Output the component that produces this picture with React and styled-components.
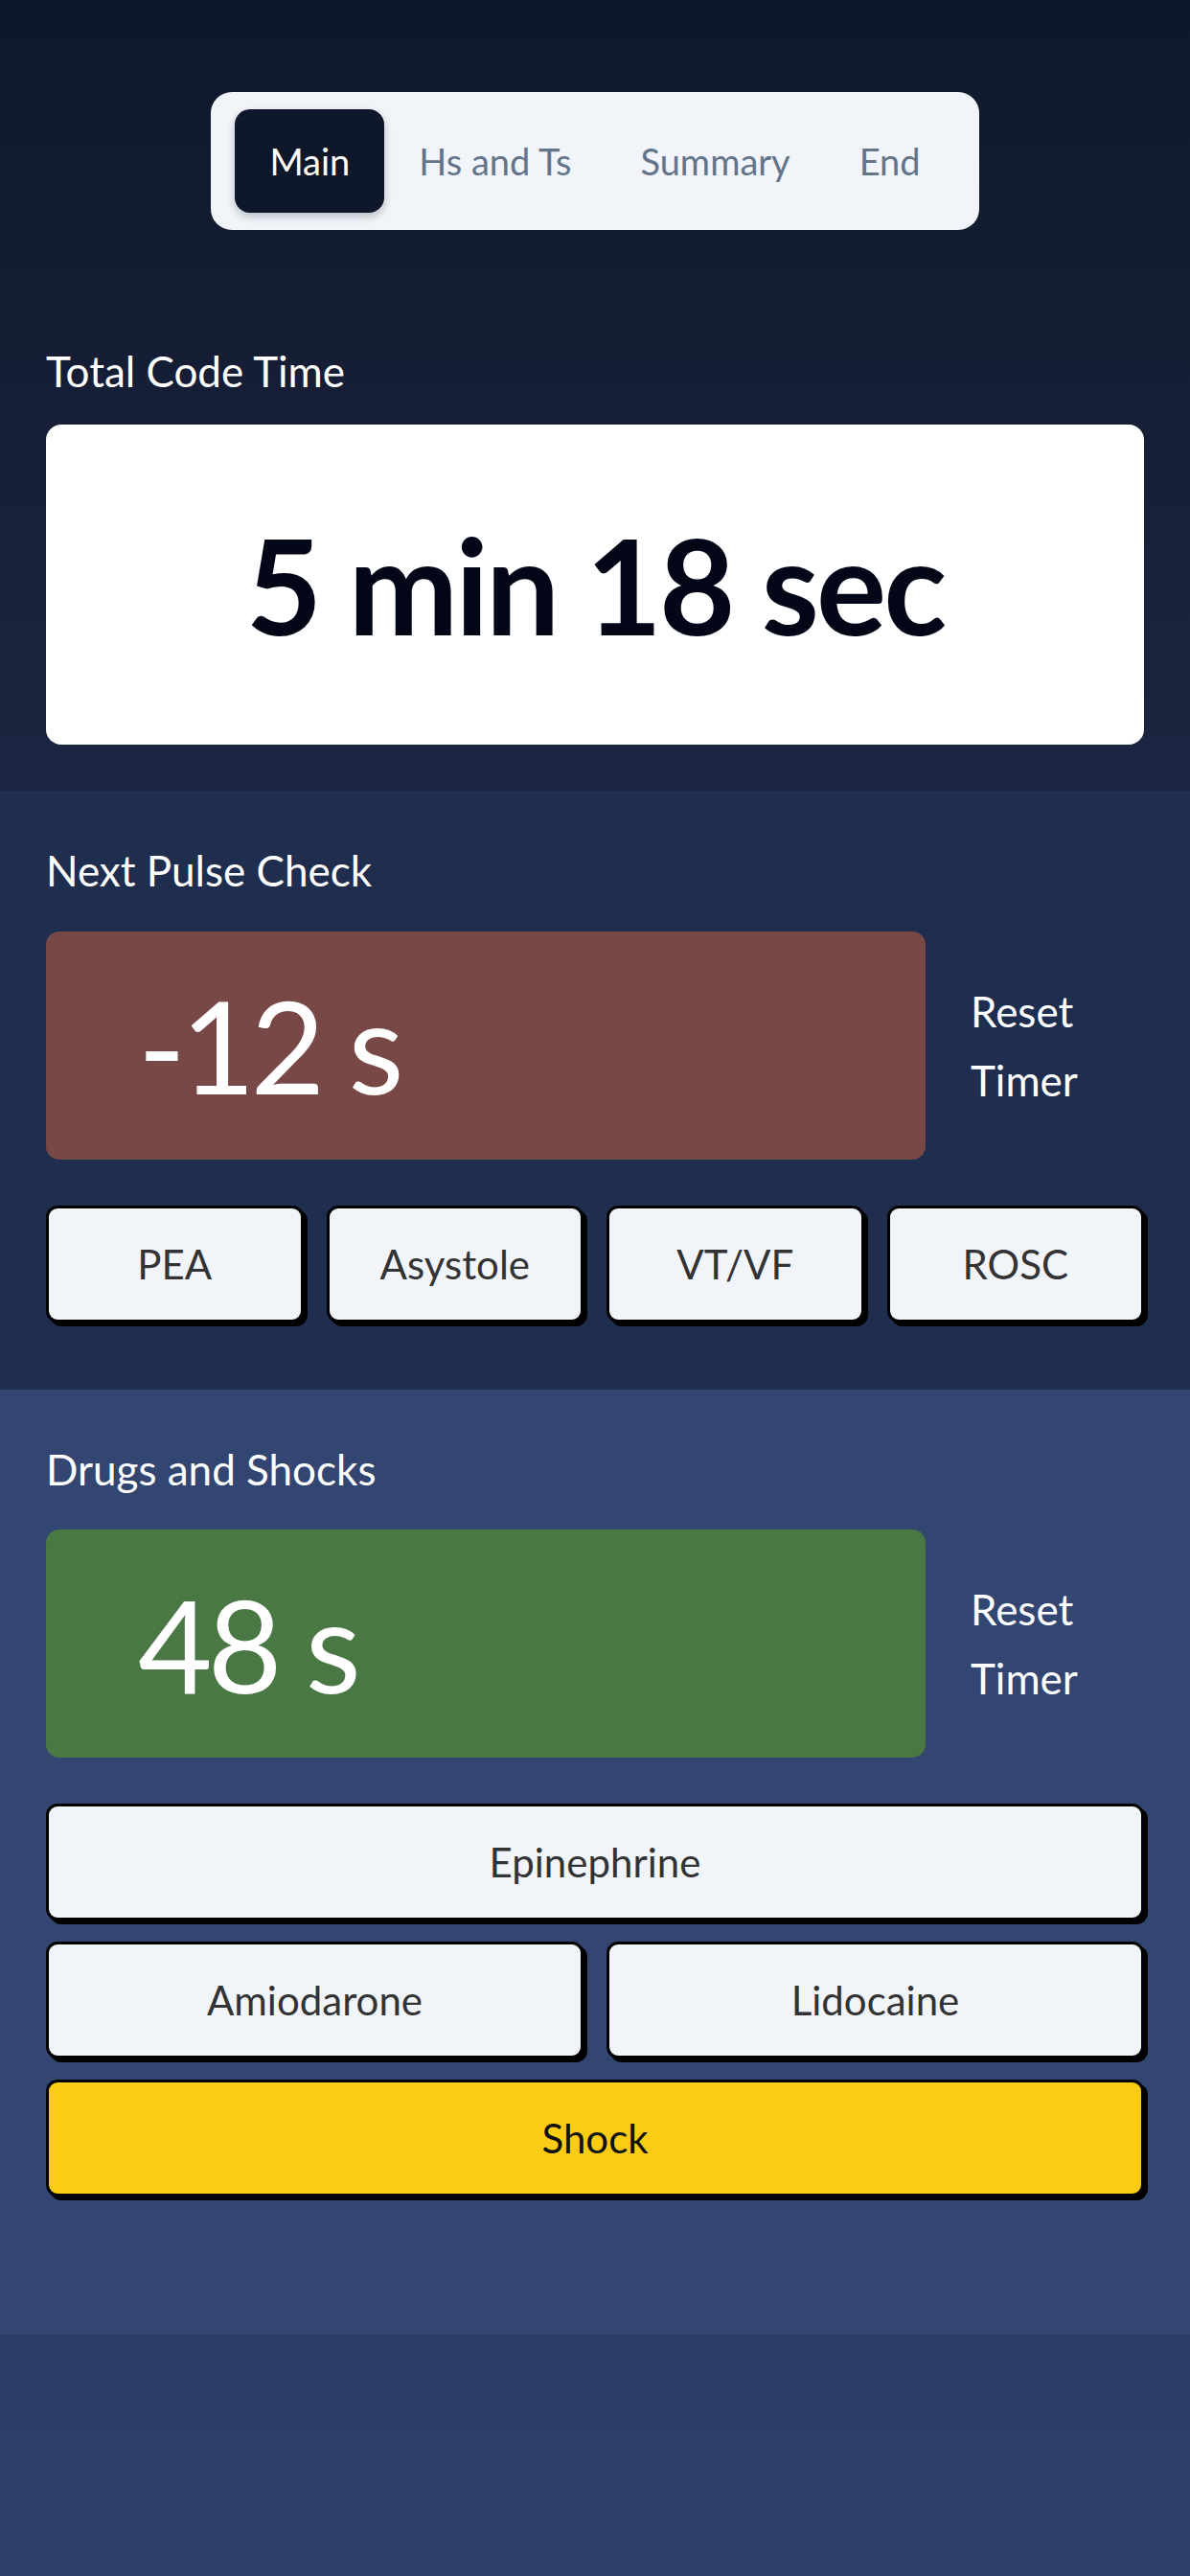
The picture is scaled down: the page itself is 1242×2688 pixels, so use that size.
import styled, { createGlobalStyle } from "styled-components";

const Global = createGlobalStyle`
    html, body {
        margin: 0;
        padding: 0;
    }
    body {
        font-family: Lato, "Noto Sans", sans-serif;
        background: #30416b;
    }
`

const Page = styled.div`
    min-height: 2688px;
    display: flex;
    flex-direction: column;
    background: linear-gradient(to bottom, #0f172a 0px, #1c2642 824px, #2f406a 2688px);
`

const Section = styled.section`
    padding: ${(props) => props.$pad};
    background: ${(props) => props.$bg || "transparent"};
    display: flex;
    flex-direction: column;
`

const TabBar = styled.nav`
    align-self: center;
    display: flex;
    padding: 18px 25px;
    border-radius: 22px;
    background: #f1f5f9;
`

const Tab = styled.button`
    border: none;
    height: 108px;
    padding: 0 36px;
    border-radius: 16px;
    font-family: inherit;
    font-size: 38px;
    background: ${(props) => (props.$active ? "#0f172a" : "transparent")};
    color: ${(props) => (props.$active ? "#ffffff" : "#64748b")};
    box-shadow: ${(props) => (props.$active ? "0 4px 8px rgba(15, 23, 42, 0.25)" : "none")};
`

const Label = styled.h2`
    margin: ${(props) => props.$mt || 0}px 0 ${(props) => props.$mb}px;
    font-size: 44px;
    font-weight: 400;
    line-height: 1.2;
    color: #ffffff;
`

const TimeCard = styled.div`
    height: 334px;
    border-radius: 16px;
    background: #ffffff;
    display: flex;
    align-items: center;
    justify-content: center;
    font-size: 137px;
    font-weight: 700;
    letter-spacing: -3px;
    color: #020617;
`

const TimerRow = styled.div`
    display: grid;
    grid-template-columns: 1fr 181px;
    column-gap: 47px;
    align-items: center;
`

const TimerBox = styled.div`
    height: 238px;
    border-radius: 14px;
    background: ${(props) => props.$bg};
    display: flex;
    align-items: center;
    padding-left: 96px;
    font-size: 134px;
    letter-spacing: -5px;
    color: #ffffff;
`

const ResetButton = styled.button`
    border: none;
    background: none;
    padding: 0;
    text-align: left;
    font-family: inherit;
    font-size: 44px;
    line-height: 72px;
    color: #ffffff;
`

const ButtonGrid = styled.div`
    margin-top: 48px;
    display: grid;
    grid-template-columns: repeat(${(props) => props.$cols}, 1fr);
    gap: 22px 24px;
`

const ActionButton = styled.button`
    grid-column: ${(props) => (props.$wide ? "1 / -1" : "auto")};
    height: 122px;
    border: 3px solid #000000;
    border-radius: 12px;
    box-shadow: 4px 4px 0 #000000;
    background: ${(props) => (props.$accent ? "#facc15" : "#f1f5f9")};
    color: ${(props) => (props.$accent ? "#111111" : "#333333")};
    font-family: inherit;
    font-size: 42px;
`

const tabs = ["Main", "Hs and Ts", "Summary", "End"]
const rhythms = ["PEA", "Asystole", "VT/VF", "ROSC"]

const Timer = ({ value, bg }) => (
    <TimerRow>
        <TimerBox $bg={bg}>{value}</TimerBox>
        <ResetButton>Reset<br />Timer</ResetButton>
    </TimerRow>
)

const App = () => {
    return (
        <Page>
            <Global />
            <Section $pad="96px 48px 48px">
                <TabBar>
                    {tabs.map((t, i) => (
                        <Tab key={t} $active={i === 0}>{t}</Tab>
                    ))}
                </TabBar>
                <Label $mt={121} $mb={29}>Total Code Time</Label>
                <TimeCard>5 min 18 sec</TimeCard>
            </Section>

            <Section $pad="57px 48px 70px" $bg="#1f2d4f">
                <Label $mb={37}>Next Pulse Check</Label>
                <Timer value="-12 s" bg="#784846" />
                <ButtonGrid $cols={4}>
                    {rhythms.map((r) => (
                        <ActionButton key={r}>{r}</ActionButton>
                    ))}
                </ButtonGrid>
            </Section>

            <Section $pad="57px 48px 144px" $bg="#334571">
                <Label $mb={37}>Drugs and Shocks</Label>
                <Timer value="48 s" bg="#4a7845" />
                <ButtonGrid $cols={2}>
                    <ActionButton $wide>Epinephrine</ActionButton>
                    <ActionButton>Amiodarone</ActionButton>
                    <ActionButton>Lidocaine</ActionButton>
                    <ActionButton $wide $accent>Shock</ActionButton>
                </ButtonGrid>
            </Section>
        </Page>
    )
}

export default App
